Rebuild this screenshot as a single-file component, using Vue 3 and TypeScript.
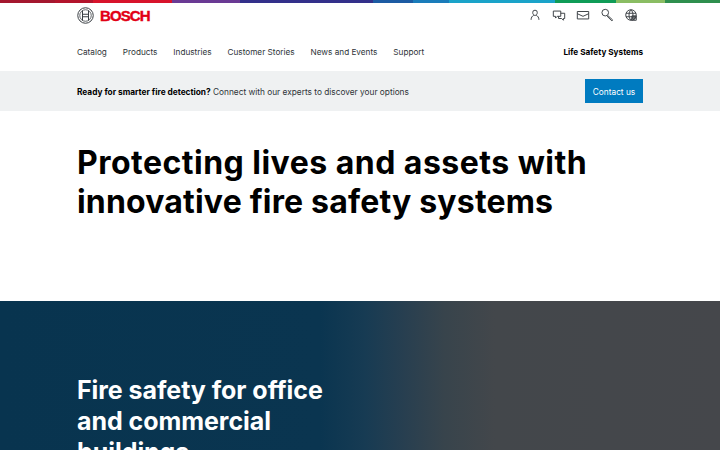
<template>
  <div class="page">
    <div class="rainbow"></div>
    <header class="header">
      <div class="top-row">
        <a class="logo" href="#" aria-label="Bosch">
          <svg width="17" height="17" viewBox="0 0 34 34" fill="none" stroke="#3a3f44" aria-hidden="true">
            <circle cx="17" cy="17" r="15.5" stroke-width="2" />
            <circle cx="17" cy="17" r="11.5" stroke-width="1.6" />
            <path d="M11 7v20M23 7v20M11 14.5h12M11 19.5h12" stroke-width="2" />
          </svg>
          <span class="wordmark">BOSCH</span>
        </a>
        <div class="actions">
          <svg v-for="icon in icons" :key="icon.name" width="14" height="14" viewBox="0 0 16 16" fill="none" stroke="#3a3f44" stroke-width="1.1" :aria-label="icon.name">
            <path :d="icon.d" />
          </svg>
        </div>
      </div>
      <nav class="nav-row">
        <div class="links">
          <a v-for="link in links" :key="link" href="#">{{ link }}</a>
        </div>
        <span class="division">Life Safety Systems</span>
      </nav>
    </header>

    <section class="promo">
      <p><strong>Ready for smarter fire detection?</strong> Connect with our experts to discover your options</p>
      <button class="contact">Contact us</button>
    </section>

    <section class="intro">
      <h1>Protecting lives and assets with <span class="tight">innovative fire safety systems</span></h1>
    </section>

    <section class="hero">
      <h2>Fire safety for office and commercial buildings</h2>
    </section>
  </div>
</template>

<script setup lang="ts">
const links: string[] = ['Catalog', 'Products', 'Industries', 'Customer Stories', 'News and Events', 'Support']

const icons: { name: string; d: string }[] = [
  { name: 'Account', d: 'M8 2.500a2.600 2.600 0 0 1 2.600 2.700c0 1.700-1.100 3.300-2.600 3.300S5.400 6.900 5.400 5.200A2.600 2.600 0 0 1 8 2.500zM3.500 13.500c0-2.800 1.500-4.500 3-5M12.500 13.500c0-2.800-1.500-4.500-3-5' },
  { name: 'Contact', d: 'M1.500 3.500h8.500v6H6l-2 2v-2H1.500zM10 6h4.500v6H13v2l-2-2H7.500V9.500' },
  { name: 'Mail', d: 'M1.500 4h13v8.500h-13zM1.500 6.500l6.500 3 6.500-3' },
  { name: 'Search', d: 'M6 1.500a3.800 3.800 0 1 1 0 7.600a3.800 3.800 0 0 1 0-7.600zM8.800 8.500l5.700 5.200l-1 1L8 9.300' },
  { name: 'Language', d: 'M8 2a6 6 0 1 0 0 12A6 6 0 0 0 8 2zM8 2c-3 3-3 9 0 12M8 2c3 3 3 9 0 12M2.300 6h11.400M2.300 10h11.400M9 9h5v5H9zM11.500 9v5M9 11.500h5' },
]
</script>

<style>
html, body { margin: 0; background: #fff; overflow: hidden; }
</style>

<style scoped>
.page { width: 720px; height: 450px; overflow: hidden; font-family: Inter, "Noto Sans", sans-serif; color: #000; }
.rainbow {
  height: 3px;
  background: linear-gradient(90deg, #a4172f 0 55px, #b3142c 55px 93px, #d8132b 93px 172px, #6a3a94 172px 240px, #33308a 240px 373px, #1c5ba3 373px 413px, #1a7cba 413px 449px, #1aa3c9 449px 555px, #0f9c57 555px 616px, #8abd63 616px 665px, #2f8f4e 665px 720px);
}
.header { padding: 0 77px; }
.top-row { display: flex; justify-content: space-between; align-items: center; height: 24px; }
.logo { display: flex; align-items: center; gap: 6px; text-decoration: none; }
.wordmark { font-family: "Liberation Sans", sans-serif; font-weight: 700; font-size: 15px; color: #e20015; letter-spacing: -0.9px; -webkit-text-stroke: 0.4px #e20015; }
.actions { display: flex; gap: 10px; margin-right: 5px; }
.nav-row { display: flex; justify-content: space-between; align-items: center; height: 48px; padding-top: 1px; box-sizing: border-box; font-size: 8.2px; }
.links { display: flex; gap: 16px; }
.links a { color: #2e3438; text-decoration: none; }
.division { font-weight: 700; }
.promo { background: #eff1f2; height: 40px; margin-top: -4px; padding: 0 77px; display: flex; align-items: center; justify-content: space-between; font-size: 8.3px; color: #2e3438; }
.promo p { margin: 0; padding-top: 1px; }
.promo strong { color: #000; }
.contact { width: 58px; height: 24px; background: #007bc0; border: 0; color: #fff; font: inherit; padding: 1px 0 0; }
.intro { height: 189px; padding: 0 77px; box-sizing: border-box; }
.intro h1 { margin: 0; padding-top: 32px; font-size: 32px; line-height: 39px; font-weight: 700; letter-spacing: 0.48px; max-width: 540px; }
.tight { letter-spacing: 0.18px; }
.hero { height: 150px; padding: 74px 77px 0; border-top: 1px solid rgba(255, 255, 255, 0.5); box-sizing: border-box; background: linear-gradient(90deg, #08344f 0, #0a3550 320px, #173b53 365px, #283f50 405px, #38444c 445px, #43474b 495px, #45474b 720px); background-clip: padding-box; color: #fff; }
.hero h2 { margin: 0; font-size: 25px; line-height: 31px; font-weight: 700; letter-spacing: -0.05px; max-width: 260px; }
</style>
